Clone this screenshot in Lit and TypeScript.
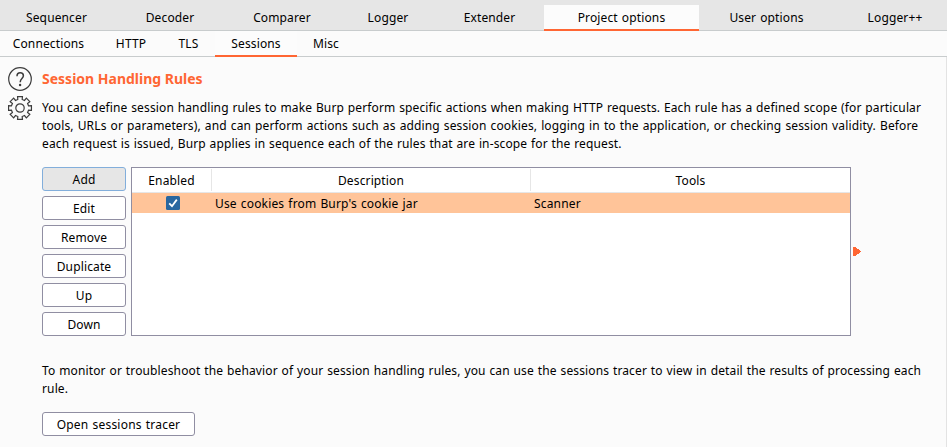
import { LitElement, html, css } from "lit";
import { customElement, property } from "lit/decorators.js";
import { classMap } from "lit/directives/class-map.js";

interface Tab { label: string; selected?: boolean; }

const TOOLS: Tab[] = [
  { label: "Sequencer" }, { label: "Decoder" }, { label: "Comparer" }, { label: "Logger" },
  { label: "Extender" }, { label: "Project options", selected: true }, { label: "User options" }, { label: "Logger++" },
];
const SECTIONS: Tab[] = [
  { label: "Connections" }, { label: "HTTP" }, { label: "TLS" }, { label: "Sessions", selected: true }, { label: "Misc" },
];

@customElement("burp-tabs")
class BurpTabs extends LitElement {
  @property({ attribute: false }) tabs: Tab[] = [];
  @property({ reflect: true }) level = "tool";
  static styles = css`
    :host { display: grid; box-sizing: border-box; overflow: hidden; }
    :host([level="tool"]) {
      height: 31px; padding-top: 5px; margin-left: -4px; background: #e6e6e6; box-shadow: inset 0 -1px #c8cccd;
      grid-template-columns: 121px 106px 118px 94px 109px 155px 135px 122px;
    }
    :host([level="section"]) {
      height: 26px; margin-left: -3px; box-shadow: inset 0 -1px #c8cccd;
      grid-template-columns: 103px 62px 53px 82px 58px;
    }
    .tab { display: flex; align-items: center; justify-content: center; white-space: nowrap; box-sizing: border-box; }
    .selected { background: #fcfcfc; box-shadow: inset 0 -2px #ff6633; }
  `;
  render() {
    return this.tabs.map((t) => html`<div class=${classMap({ tab: true, selected: !!t.selected })}>${t.label}</div>`);
  }
}

function gearPath(): string {
  const pts: string[] = [];
  for (let i = 0; i < 8; i++) {
    const a = (i * Math.PI) / 4 - Math.PI / 2;
    for (const [r, d] of [[8.8, -0.25], [11.7, -0.21], [11.7, 0.21], [8.8, 0.25]]) {
      pts.push(`${(12 + r * Math.cos(a + d)).toFixed(2)} ${(12 + r * Math.sin(a + d)).toFixed(2)}`);
    }
  }
  return `M${pts.join("L")}Z`;
}

@customElement("app-root")
class AppRoot extends LitElement {
  static styles = css`
    :host {
      display: block; width: 947px; height: 447px; overflow: hidden; box-sizing: border-box;
      background: #fbfbfb; color: #000; font: 12px/18px "Noto Sans", "Open Sans", sans-serif;
      letter-spacing: 0.13px; word-spacing: 0.8px;
    }
    .panel { display: grid; grid-template-columns: 34px 1fr; box-sizing: border-box; height: 390px; width: 947px;
      padding: 10px 0 0 8px; border-right: 1px solid #e3e3e3; }
    .icons { display: flex; flex-direction: column; gap: 4px; }
    .icons svg { display: block; width: 25px; height: 25px; fill: none; stroke: #3c3c3c; stroke-width: 1.2; }
    .icons .mark { stroke-width: 1.5; }
    .icons .dot { fill: #3c3c3c; stroke: none; }
    h1 { margin: 3px 0 11px; font-size: 14px; line-height: 18px; font-weight: 700; color: #ff6633;
      letter-spacing: 0; word-spacing: 0; }
    p { margin: 0; white-space: nowrap; }
    .editor { display: flex; margin-top: 14px; height: 169px; }
    .buttons { display: flex; flex-direction: column; gap: 5px; width: 84px; margin-right: 5px; }
    .button { height: 24px; flex: none; box-sizing: border-box; border: 1px solid #908ea2; border-radius: 3px;
      padding-top: 1px; line-height: 21px; background: #fff; text-align: center; }
    .hover { background: #e6e6e6; border-color: #82aedb; }
    .table { width: 720px; box-sizing: border-box; border: 1px solid #908ea2; background: #fff; }
    .row { display: grid; grid-template-columns: 80px 319px 319px; height: 20px; align-items: center; background: #ffc499; }
    .head { height: 25px; box-sizing: border-box; border-bottom: 1px solid #e6e6e6; background: #fff; text-align: center; }
    .head > div { height: 22px; line-height: 23px; box-sizing: border-box; }
    .head > div:not(:last-child) { border-right: 1px solid #e6e6e6; }
    .cell { padding: 1px 0 0 3px; letter-spacing: 0.16px; }
    .check { display: block; width: 14px; height: 14px; margin-left: 34px; }
    .arrow { align-self: center; width: 8px; height: 9px; margin-left: 2px; fill: #ff6633; shape-rendering: crispEdges; }
    .note { margin-top: 26px; word-spacing: 0.6px; }
    .tracer { width: 153px; margin-top: 14px; letter-spacing: 0.2px; }
    .intro { word-spacing: 0.53px; }
    .wide { word-spacing: 0.78px; }
  `;
  render() {
    return html`
      <burp-tabs level="tool" .tabs=${TOOLS}></burp-tabs>
      <burp-tabs level="section" .tabs=${SECTIONS}></burp-tabs>
      <div class="panel">
        <div class="icons">
          <svg viewBox="0 0 25 25"><circle cx="12" cy="12" r="11.3"/><path class="mark" d="M9 9.2C9 6.8 10.2 5.8 12.2 5.8S15.4 7 15.4 8.8C15.4 11.5 12.2 11.8 12.2 15.3"/><circle class="dot" cx="12.1" cy="18" r="1.2"/></svg>
          <svg viewBox="0 0 25 25"><path d=${gearPath()}/><circle cx="12" cy="12" r="4.2"/></svg>
        </div>
        <div class="content">
          <h1>Session Handling Rules</h1>
          <p class="intro">You can define session handling rules to make Burp perform specific actions when making HTTP requests. Each rule has a defined scope (for particular<br><span class="wide">tools, URLs or parameters), and can perform actions such as adding session cookies, logging in to the application, or checking session validity. Before</span><br>each request is issued, Burp applies in sequence each of the rules that are in-scope for the request.</p>
          <div class="editor">
            <div class="buttons">
              ${["Add", "Edit", "Remove", "Duplicate", "Up", "Down"].map((b, i) => html`<div class=${classMap({ button: true, hover: i === 0 })}>${b}</div>`)}
            </div>
            <div class="table">
              <div class="row head"><div>Enabled</div><div>Description</div><div>Tools</div></div>
              <div class="row">
                <svg class="check" viewBox="0 0 14 14"><rect width="14" height="14" rx="1.5" fill="#2867a0"/><path d="M3.2 7.3L6 10.2L10.8 3.6" fill="none" stroke="#fff" stroke-width="1.8"/></svg>
                <div class="cell">Use cookies from Burp's cookie jar</div><div class="cell">Scanner</div>
              </div>
            </div>
            <svg class="arrow" viewBox="0 0 8 9"><path d="M0 0H2L8 4V5L2 9H0Z"/></svg>
          </div>
          <p class="note">To monitor or troubleshoot the behavior of your session handling rules, you can use the sessions tracer to view in detail the results of processing each<br>rule.</p>
          <div class="button tracer">Open sessions tracer</div>
        </div>
      </div>`;
  }
}
